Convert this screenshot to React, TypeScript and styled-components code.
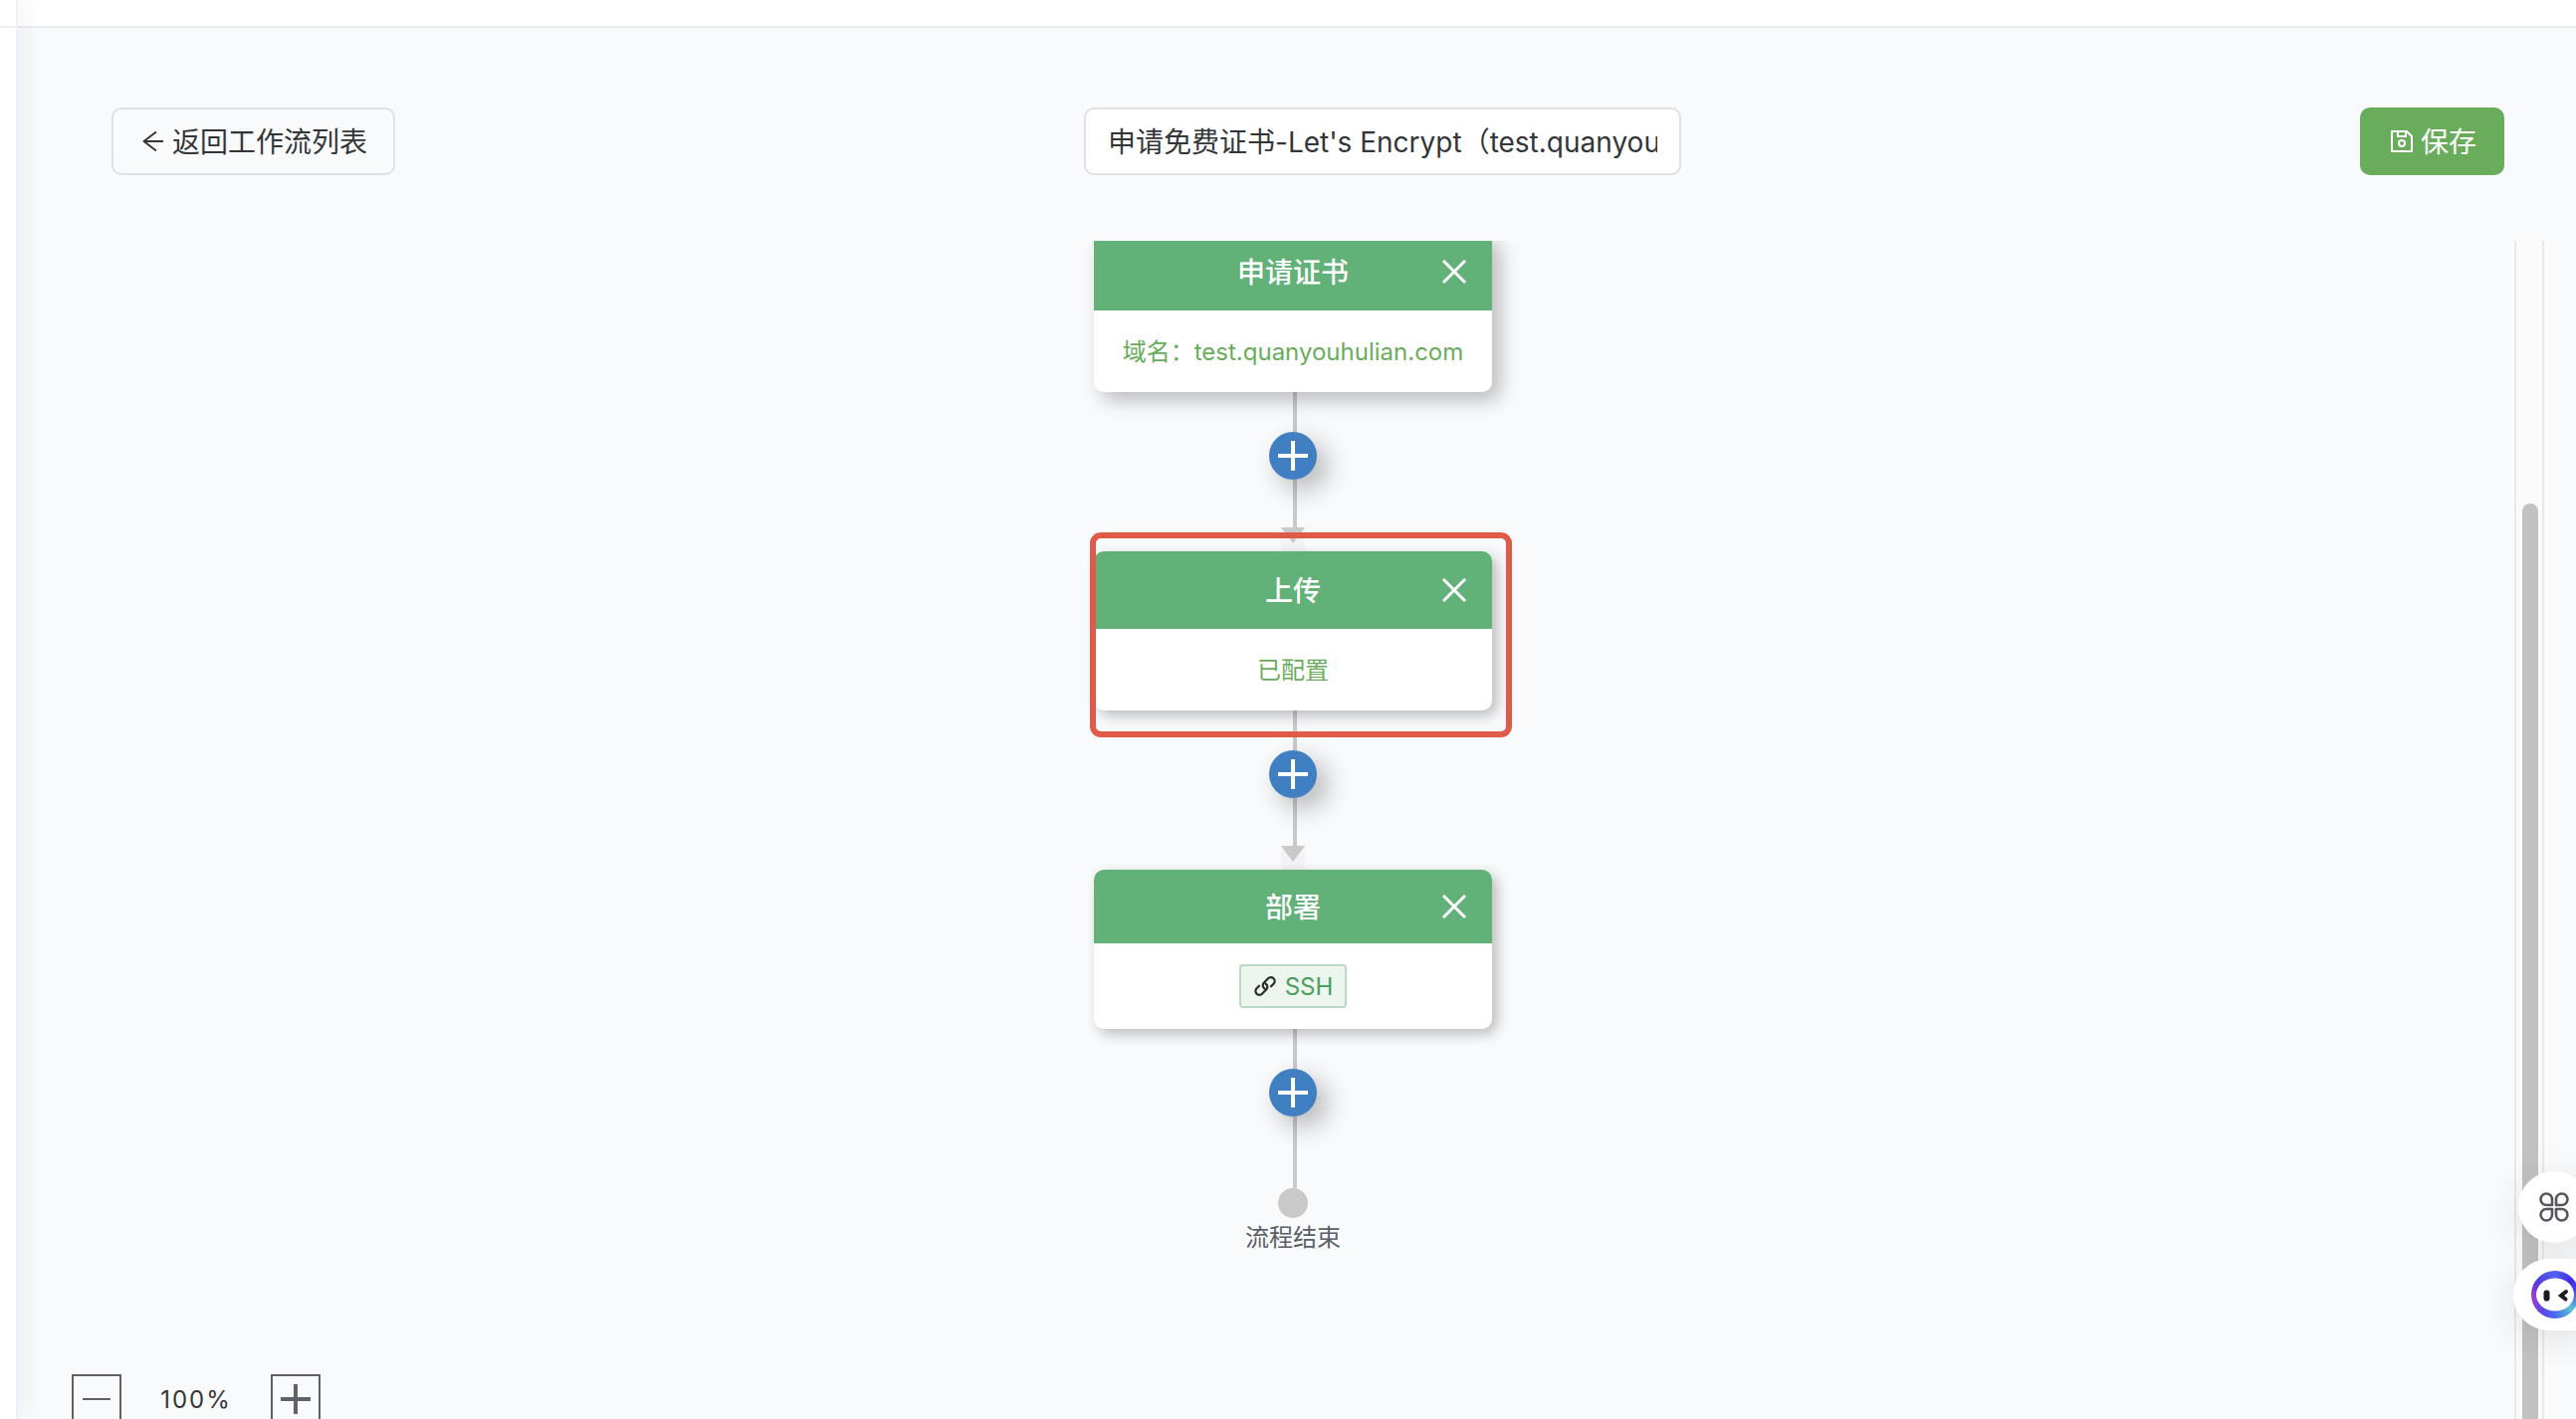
import React, { useState } from "react";
import styled, { createGlobalStyle, css } from "styled-components";

const GlobalStyle = createGlobalStyle`
  *, *::before, *::after { box-sizing: border-box; }
  html, body, #root { height: 100%; }
  body {
    margin: 0;
    overflow: hidden;
    background: #f9fafc;
    color: #333639;
    font-family: Inter, "Noto Sans CJK SC", sans-serif;
    font-size: 24px;
  }
  button, input { font: inherit; color: inherit; margin: 0; }
`;

const LINE = "#c9c9c9";

const Shell = styled.div`
  display: flex;
  height: 100vh;
  overflow: hidden;
`;

const Sidebar = styled.aside`
  position: relative;
  z-index: 2;
  flex: none;
  width: 18px;
  background: #fff;
  border-right: 2px solid #efeff5;
  box-shadow: 4px 0 28px rgba(29, 35, 41, 0.07);
`;

const SidebarTop = styled.div`
  height: 28px;
  border-bottom: 2px solid #efeff5;
`;

const Page = styled.div`
  flex: 1;
  min-width: 0;
  display: flex;
  flex-direction: column;
`;

const TopBar = styled.header`
  flex: none;
  height: 28px;
  background: #fff;
  border-bottom: 2px solid #ececee;
`;

const Content = styled.main`
  flex: 1;
  min-height: 0;
  display: flex;
  flex-direction: column;
  padding: 80px 32px 0 54px;
`;

const Toolbar = styled.div`
  flex: none;
  display: flex;
  align-items: center;
  justify-content: space-between;
  padding: 0 40px;
  margin-bottom: 66px;
`;

const Button = styled.button<{ $primary?: boolean }>`
  display: flex;
  align-items: center;
  gap: 5px;
  height: 68px;
  padding: 0 26px;
  border: 2px solid #e0e0e6;
  border-radius: 10px;
  background: transparent;
  font-size: 28px;
  line-height: 40px;
  cursor: pointer;
  ${(p) =>
    p.$primary &&
    css`
      border-color: #69ad5c;
      background: #69ad5c;
      color: #fff;
    `}
`;

const ButtonText = styled.span`
  padding-top: 2px;
`;

const NameField = styled.label`
  padding-left: 10px;
`;

const NameInput = styled.input`
  display: block;
  width: 600px;
  height: 68px;
  padding: 0 22px 2px;
  border: 2px solid #e0e0e6;
  border-radius: 10px;
  outline: none;
  background: #fff;
  font-size: 28px;
`;

const Workspace = styled.div`
  flex: 1;
  min-height: 0;
  display: flex;
  overflow: hidden;
`;

const Canvas = styled.section`
  flex: 1;
  min-width: 0;
  display: flex;
  flex-direction: column;
`;

const Flow = styled.div`
  display: flex;
  flex-direction: column;
  align-items: center;
  margin-top: -8px;
`;

const Card = styled.article<{ $raised?: boolean }>`
  position: relative;
  z-index: 1;
  display: flex;
  flex-direction: column;
  width: 400px;
  height: 160px;
  border-radius: 10px;
  background: #fff;
  box-shadow: ${(p) =>
    p.$raised
      ? "8px 8px 20px rgba(0, 0, 0, 0.26)"
      : "5px 5px 14px rgba(0, 0, 0, 0.26)"};
`;

const CardHeader = styled.header`
  flex: 1;
  display: grid;
  grid-template-columns: 1fr auto 1fr;
  align-items: center;
  padding: 0 26px;
  border-radius: 10px 10px 0 0;
  background: #61b178;
  color: #fff;
`;

const CardTitle = styled.h2`
  grid-column: 2;
  margin: 0;
  padding-top: 2px;
  font-size: 28px;
  line-height: 40px;
  font-weight: 500;
`;

const CloseButton = styled.button`
  justify-self: end;
  display: flex;
  padding: 0;
  border: 0;
  background: none;
  cursor: pointer;
`;

const CardBody = styled.div`
  display: flex;
  justify-content: center;
  padding: 20px 0;
`;

const CardText = styled.p`
  margin: 0;
  padding-top: 2px;
  color: #69ad5c;
  line-height: 40px;
  white-space: nowrap;
`;

const Tag = styled.span`
  display: flex;
  align-items: center;
  gap: 8px;
  height: 44px;
  margin: 1px 0;
  padding: 0 12px;
  border: 2px solid #b8dac2;
  border-radius: 4px;
  background: #ecf5ee;
  color: #4a9f5f;
  line-height: 40px;
`;

const TagText = styled.span`
  padding-top: 2px;
`;

const Highlight = styled.div`
  position: absolute;
  left: -4px;
  right: -20px;
  top: -19px;
  bottom: -27px;
  border: 6px solid #e05a48;
  border-radius: 11px;
  pointer-events: none;
`;

const Connector = styled.div`
  display: flex;
  flex-direction: column;
  align-items: center;
  height: 160px;
`;

const Line = styled.div<{ $grow?: boolean }>`
  flex: ${(p) => (p.$grow ? "1" : "none")};
  width: 4px;
  height: 40px;
  margin-left: 4px;
  background: ${LINE};
`;

const AddButton = styled.button`
  position: relative;
  flex: none;
  display: flex;
  align-items: center;
  justify-content: center;
  width: 48px;
  height: 48px;
  padding: 0;
  border: 0;
  border-radius: 50%;
  background: #4080c2;
  box-shadow: 10px 10px 26px rgba(0, 0, 0, 0.28);
  cursor: pointer;
`;

const Arrow = styled.div`
  width: 24px;
  height: 24px;
  background: #f4f4f6;

  &::before {
    content: "";
    display: block;
    height: 16px;
    background: ${LINE};
    clip-path: polygon(0 0, 100% 0, 50% 100%);
  }
`;

const EndDot = styled.div`
  width: 30px;
  height: 30px;
  border-radius: 50%;
  background: ${LINE};
`;

const EndLabel = styled.p`
  margin: 0;
  color: #5a5e66;
  line-height: 40px;
`;

const ZoomBar = styled.div`
  display: flex;
  align-items: flex-start;
  height: 45px;
  margin-top: auto;
`;

const ZoomButton = styled.button`
  flex: none;
  display: flex;
  align-items: center;
  justify-content: center;
  width: 50px;
  height: 50px;
  padding: 0;
  border: 2px solid #5f6168;
  background: transparent;
  cursor: pointer;
`;

const ZoomValue = styled.output`
  width: 150px;
  line-height: 52px;
  text-align: center;
  letter-spacing: 2px;
`;

const ScrollTrack = styled.div`
  flex: none;
  display: flex;
  width: 30px;
  padding: 264px 0 0 6px;
  border: 2px solid #e8e8e8;
  border-width: 0 2px;
  background: #fafafa;
`;

const ScrollThumb = styled.div`
  width: 16px;
  border-radius: 8px 8px 0 0;
  background: #c1c1c1;
`;

const FloatingDock = styled.div`
  position: fixed;
  z-index: 3;
  right: 0;
  bottom: 89px;
  display: flex;
  flex-direction: column;
  align-items: flex-end;
  gap: 16px;
`;

const DockButton = styled.button<{ $wide?: boolean }>`
  display: flex;
  align-items: center;
  width: ${(p) => (p.$wide ? 77 : 72)}px;
  height: 72px;
  margin-right: -14px;
  padding: 0 0 0 ${(p) => (p.$wide ? 18 : 21)}px;
  border: 0;
  border-radius: ${(p) => (p.$wide ? "36px 0 0 36px" : "50%")};
  background: #fff;
  box-shadow: 0 8px 40px rgba(0, 0, 0, 0.1);
  cursor: pointer;

  svg { flex: none; }
`;

const BackIcon = () => (
  <svg width="28" height="28" viewBox="0 0 28 28" fill="none" stroke="currentColor" strokeWidth="2" aria-hidden="true">
    <path d="M24 14H4.500M17 4.500L4.500 14L17 23.500" strokeLinejoin="round" />
  </svg>
);

const SaveIcon = () => (
  <svg width="28" height="28" viewBox="0 0 28 28" fill="none" stroke="currentColor" strokeWidth="2" aria-hidden="true">
    <path d="M4 4H19L24 9V24H4Z" strokeLinejoin="round" />
    <path d="M10 4V9H18V4" />
    <circle cx="14" cy="16" r="3" />
  </svg>
);

const CloseIcon = () => (
  <svg width="24" height="24" viewBox="0 0 24 24" stroke="#fff" strokeWidth="3" aria-hidden="true">
    <path d="M1 1L23 23M23 1L1 23" />
  </svg>
);

const PlusIcon = ({ color }: { color: string }) => (
  <svg width="30" height="30" viewBox="0 0 30 30" stroke={color} strokeWidth="4" aria-hidden="true">
    <path d="M0 15H30M15 0V30" />
  </svg>
);

const MinusIcon = () => (
  <svg width="30" height="30" viewBox="0 0 30 30" stroke="#5f6168" strokeWidth="2" aria-hidden="true">
    <path d="M1 15H29" />
  </svg>
);

const LinkIcon = () => (
  <svg width="24" height="24" viewBox="0 0 24 24" fill="none" stroke="#2b2b2b" strokeWidth="2.200" strokeLinecap="round" aria-hidden="true">
    <path d="M11.500 14.500A3.800 3.800 0 0 1 10.500 9L15 4.300A3.800 3.800 0 0 1 20.500 9.700L18 12.300" />
    <path d="M12.500 9.500A3.800 3.800 0 0 1 13.500 15L9 19.700A3.800 3.800 0 0 1 3.500 14.300L6 11.700" />
  </svg>
);

const CloverIcon = () => (
  <svg width="30" height="30" viewBox="0 0 30 30" fill="none" stroke="#56565e" strokeWidth="2.600" strokeLinejoin="round" aria-hidden="true">
    <path d="M7.300 1.500A5.700 5.700 0 0 1 13 7.200V13H7.300A5.700 5.700 0 0 1 7.300 1.500Z" />
    <path d="M22.700 1.500A5.700 5.700 0 0 0 17 7.200V13H22.700A5.700 5.700 0 0 0 22.700 1.500Z" />
    <path d="M7.300 28.500A5.700 5.700 0 0 0 13 22.800V17H7.300A5.700 5.700 0 0 0 7.300 28.500Z" />
    <path d="M22.700 28.500A5.700 5.700 0 0 1 17 22.800V17H22.700A5.700 5.700 0 0 1 22.700 28.500Z" />
  </svg>
);

const RingFace = styled.span`
  flex: none;
  display: flex;
  align-items: center;
  justify-content: center;
  width: 48px;
  height: 48px;
  border-radius: 50%;
  background: conic-gradient(#5064ee, #4428ea 50deg, #4848ec 80deg, #58c4d4 130deg, #4a68ee 180deg, #5a48e6 215deg, #a03cd0 265deg, #5838e0 300deg, #5064ee);
`;

const AssistantIcon = () => (
  <RingFace>
    <svg width="48" height="48" viewBox="0 0 48 48" aria-hidden="true">
      <ellipse cx="24" cy="24" rx="19" ry="16.500" fill="#fff" />
      <rect x="12.500" y="19.500" width="6" height="11" rx="2.800" fill="#1c1c20" />
      <path d="M35 21L30 25L34.500 28.500" fill="none" stroke="#1c1c20" strokeWidth="4" strokeLinecap="round" />
    </svg>
  </RingFace>
);

const AddStep = () => (
  <AddButton type="button" aria-label="添加节点">
    <PlusIcon color="#fff" />
  </AddButton>
);

type StepProps = {
  title: string;
  raised?: boolean;
  highlighted?: boolean;
  children: React.ReactNode;
};

const Step = ({ title, raised, highlighted, children }: StepProps) => (
  <Card $raised={raised}>
    <CardHeader>
      <CardTitle>{title}</CardTitle>
      <CloseButton type="button" aria-label={`删除${title}`}>
        <CloseIcon />
      </CloseButton>
    </CardHeader>
    <CardBody>{children}</CardBody>
    {highlighted && <Highlight />}
  </Card>
);

const StepConnector = () => (
  <Connector>
    <Line />
    <AddStep />
    <Line $grow />
    <Arrow />
  </Connector>
);

export default function App() {
  const [name, setName] = useState("申请免费证书-Let's Encrypt（test.quanyouhulian.com）");
  const [zoom, setZoom] = useState(100);

  return (
    <>
      <GlobalStyle />
      <Shell>
        <Sidebar>
          <SidebarTop />
        </Sidebar>
        <Page>
          <TopBar />
          <Content>
            <Toolbar>
              <Button type="button">
                <BackIcon />
                <ButtonText>返回工作流列表</ButtonText>
              </Button>
              <NameField>
                <NameInput aria-label="工作流名称" value={name} onChange={(e) => setName(e.target.value)} />
              </NameField>
              <Button type="button" $primary>
                <SaveIcon />
                <ButtonText>保存</ButtonText>
              </Button>
            </Toolbar>
            <Workspace>
              <Canvas>
                <Flow>
                  <Step title="申请证书" raised>
                    <CardText>域名：test.quanyouhulian.com</CardText>
                  </Step>
                  <StepConnector />
                  <Step title="上传" highlighted>
                    <CardText>已配置</CardText>
                  </Step>
                  <StepConnector />
                  <Step title="部署">
                    <Tag>
                      <LinkIcon />
                      <TagText>SSH</TagText>
                    </Tag>
                  </Step>
                  <Connector>
                    <Line />
                    <AddStep />
                    <Line $grow />
                  </Connector>
                  <EndDot />
                  <EndLabel>流程结束</EndLabel>
                </Flow>
                <ZoomBar>
                  <ZoomButton type="button" aria-label="缩小" onClick={() => setZoom(Math.max(10, zoom - 10))}>
                    <MinusIcon />
                  </ZoomButton>
                  <ZoomValue>{zoom}%</ZoomValue>
                  <ZoomButton type="button" aria-label="放大" onClick={() => setZoom(zoom + 10)}>
                    <PlusIcon color="#5f6168" />
                  </ZoomButton>
                </ZoomBar>
              </Canvas>
              <ScrollTrack>
                <ScrollThumb />
              </ScrollTrack>
            </Workspace>
          </Content>
        </Page>
      </Shell>
      <FloatingDock>
        <DockButton type="button" aria-label="应用">
          <CloverIcon />
        </DockButton>
        <DockButton type="button" aria-label="助手" $wide>
          <AssistantIcon />
        </DockButton>
      </FloatingDock>
    </>
  );
}
